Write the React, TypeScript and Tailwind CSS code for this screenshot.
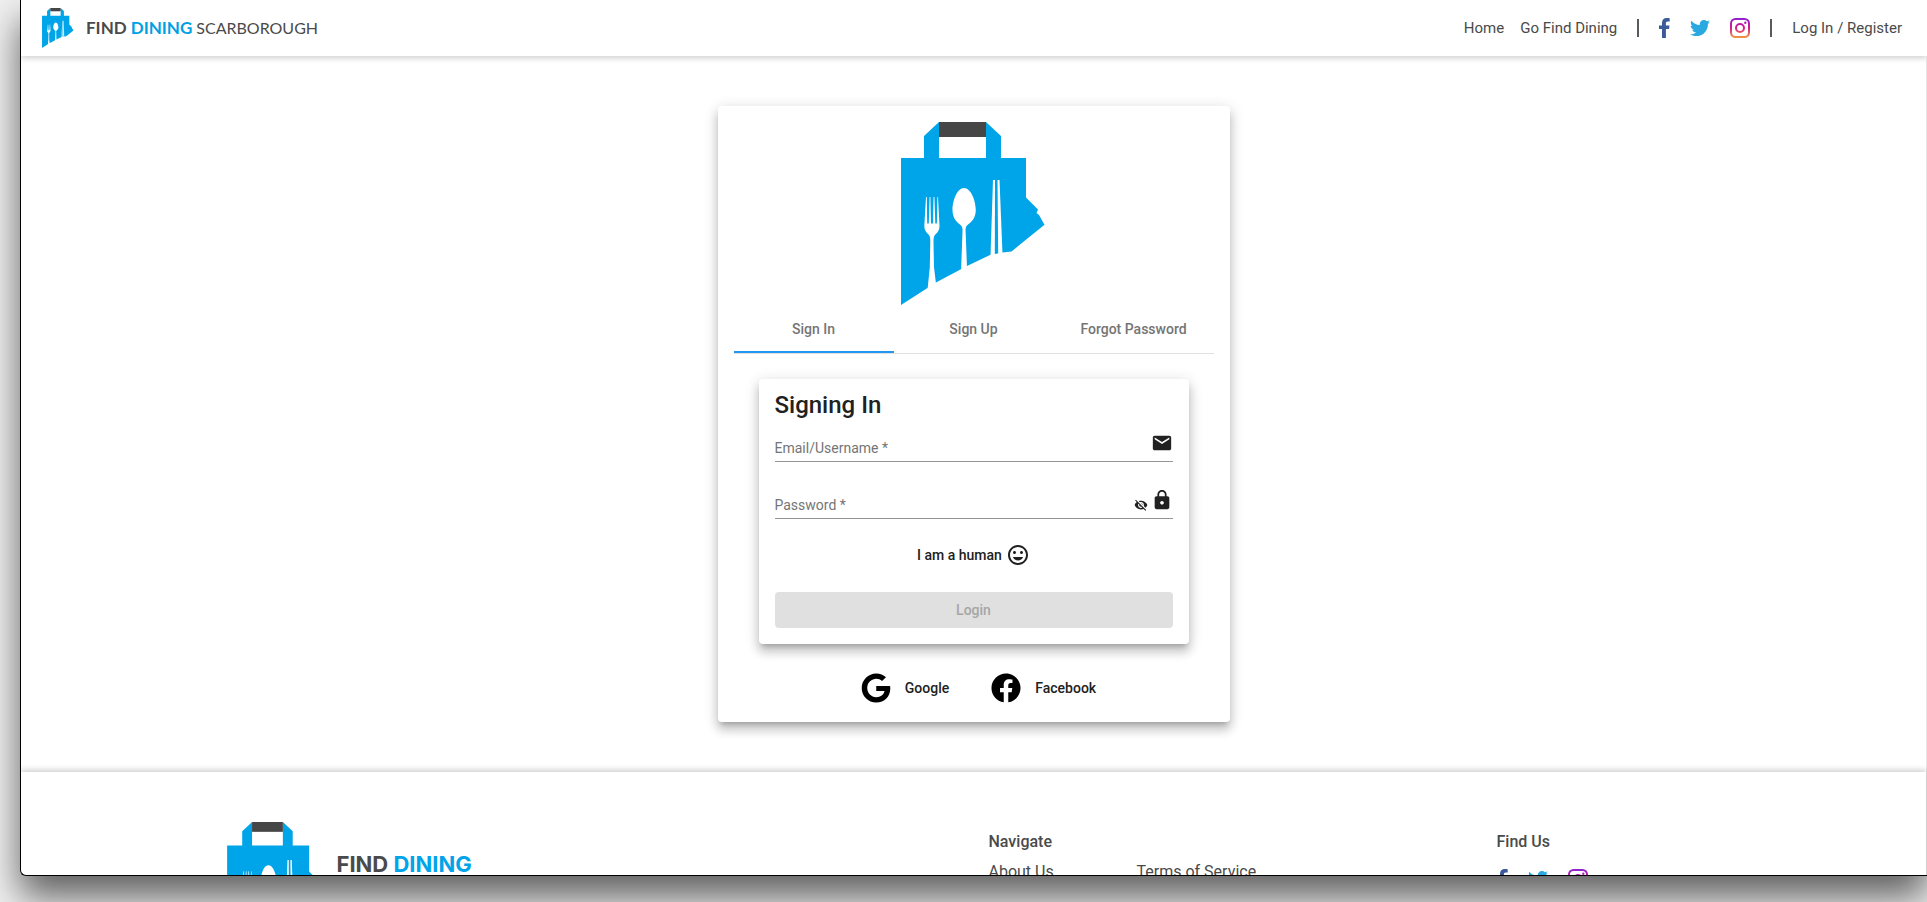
import React from "react";
import { FaTwitter, FaGoogle, FaFacebook } from "react-icons/fa";
import { MdEmail, MdLock, MdVisibilityOff, MdMood } from "react-icons/md";

function BagLogo({ className }: { className: string }) {
  return (
    <svg viewBox="0 0 146 183" className={className} aria-hidden="true">
      <g fill="#00a4e8">
        <path d="M0 36H125V75.500L137 87.500L135.500 91L138 93L143.500 102.700L110.500 129.500L101.500 130.500L89 133L66 144L34 161L26.500 166L0 183Z" />
        <path d="M23 37V14L38 0V37Z" />
        <path d="M85 0L100 14V37H85Z" />
      </g>
      <rect x="38" y="0" width="47" height="15" fill="#464646" />
      <g fill="#fff">
        <path d="M25 75L23.300 104C23.300 108 25 110 27.500 112.500C29 114 29.300 116 29.300 120L28.800 145L26.500 168L35 162L33 145L32.500 120C32.500 116 33 114 34.300 112.500C37 110 38.500 108 38.500 104L37 75H36.400L35.900 101.500H34.300L33.400 75H32.500L32 101.500H30L29.400 75H28.600L27.800 101.500H26.200L25.800 75Z" />
        <path d="M63 66C56 66 51.500 79 51.500 88C51.500 96 55.500 100 59.500 103C61.300 104.500 61.600 106 61.500 109L60 150L66 146L64.600 109C64.500 106 64.800 104.500 66.500 103C70.500 100 74.800 96 74.800 88C74.800 79 70 66 63 66Z" />
        <path d="M92 58H94L93.800 134H89.500Z" />
        <path d="M96.500 58H98.500L101.500 132H97.200Z" />
      </g>
    </svg>
  );
}

function InstagramIcon({ id }: { id: string }) {
  return (
    <svg viewBox="0 0 20 20" className="size-5" aria-hidden="true">
      <defs>
        <linearGradient id={id} x1="0" y1="0" x2="0" y2="1">
          <stop offset="0" stopColor="#8a22d6" />
          <stop offset="0.5" stopColor="#d81b8c" />
          <stop offset="1" stopColor="#f09a3e" />
        </linearGradient>
      </defs>
      <path
        fill={`url(#${id})`}
        fillRule="evenodd"
        d="M5.500 0H14.500A5.500 5.500 0 0 1 20 5.500V14.500A5.500 5.500 0 0 1 14.500 20H5.500A5.500 5.500 0 0 1 0 14.500V5.500A5.500 5.500 0 0 1 5.500 0ZM5.500 2A3.500 3.500 0 0 0 2 5.500V14.500A3.500 3.500 0 0 0 5.500 18H14.500A3.500 3.500 0 0 0 18 14.500V5.500A3.500 3.500 0 0 0 14.500 2ZM10 5A5 5 0 1 1 10 15A5 5 0 0 1 10 5ZM10 7A3 3 0 1 0 10 13A3 3 0 0 0 10 7ZM15.300 3.500A1.200 1.200 0 1 1 15.300 5.900A1.200 1.200 0 0 1 15.300 3.500Z"
      />
    </svg>
  );
}

/* Solid "f" mark with square stems */
function FacebookMark() {
  return (
    <svg viewBox="0 0 11 20" className="h-5 w-[11px]" fill="#3b5a9a" aria-hidden="true">
      <path d="M3 20V11H0V7.500H3V5C3 1.800 4.900 0 7.700 0C9.100 0 10.300 0.100 10.700 0.200V3.400H8.800C7.200 3.400 6.900 4.200 6.900 5.300V7.500H10.500L10 11H6.900V20Z" />
    </svg>
  );
}

function SocialLinks({ id }: { id: string }) {
  return (
    <div className="flex items-center gap-5">
      <a href="#facebook" aria-label="Facebook">
        <FacebookMark />
      </a>
      <a href="#twitter" aria-label="Twitter">
        <FaTwitter className="size-5 text-[#2aa9e0]" />
      </a>
      <a href="#instagram" aria-label="Instagram">
        <InstagramIcon id={id} />
      </a>
    </div>
  );
}

function Header() {
  return (
    <header className="flex h-14 shrink-0 items-center justify-between pr-[25px] pl-[21px] shadow-[0_2px_6px_rgba(0,0,0,0.2)]">
      <a href="#home" className="flex items-center gap-3">
        <BagLogo className="h-10 w-8" />
        <span className="flex items-baseline gap-1 font-[Lato,sans-serif] text-[17px] text-[#4a4a4a]">
          <b>FIND</b>
          <b className="text-[#00a0e4]">DINING</b>
          <span className="text-base">SCARBOROUGH</span>
        </span>
      </a>
      <nav className="flex items-center gap-5 text-[15px] text-[#4a4a4a]">
        <div className="flex gap-4">
          <a href="#home">Home</a>
          <a href="#find">Go Find Dining</a>
        </div>
        <span className="h-[18px] w-0.5 bg-[#5a5a5a]" />
        <SocialLinks id="instagram-header" />
        <span className="h-[18px] w-0.5 bg-[#5a5a5a]" />
        <a href="#login">Log In / Register</a>
      </nav>
    </header>
  );
}

const cardShadow =
  "rounded bg-white shadow-[0_5px_5px_-3px_rgba(0,0,0,0.2),0_8px_10px_1px_rgba(0,0,0,0.14),0_3px_14px_2px_rgba(0,0,0,0.12)]";

function Field({
  id,
  label,
  type,
  children,
}: {
  id: string;
  label: string;
  type: string;
  children: React.ReactNode;
}) {
  return (
    <div className="flex h-[41px] border-b border-[#949494]">
      <div className="relative flex flex-1 items-end pb-[3px]">
        <input
          id={id}
          type={type}
          placeholder=" "
          className="peer absolute inset-0 w-full bg-transparent pt-4 text-sm outline-none"
        />
        <label
          htmlFor={id}
          className="pointer-events-none text-sm text-[#757575] peer-focus:-translate-y-5 peer-[:not(:placeholder-shown)]:-translate-y-5"
        >
          {label}
        </label>
      </div>
      <div className="flex items-center pt-[3px]">{children}</div>
    </div>
  );
}

function SignInForm() {
  return (
    <form className={`${cardShadow} mx-[25px] mt-[25px] px-4 pb-4`}>
      <h1 className="pt-2.5 text-2xl font-medium">Signing In</h1>
      <Field id="email" label="Email/Username *" type="text">
        <MdEmail className="size-[22px]" />
      </Field>
      <div className="mt-4">
        <Field id="password" label="Password *" type="password">
          <button type="button" aria-label="Show password" className="mr-[3px] pt-2.5">
            <MdVisibilityOff className="size-3.5" />
          </button>
          <MdLock className="size-[22px]" />
        </Field>
      </div>
      <button type="button" className="mx-auto mt-[18px] flex h-9 items-center gap-1 text-sm font-medium">
        I am a human
        <MdMood className="size-6" />
      </button>
      <button disabled className="mt-[19px] h-9 w-full rounded bg-[#e0e0e0] text-sm font-medium text-[#a6a6a6]">
        Login
      </button>
    </form>
  );
}

function Footer() {
  return (
    <footer className="shrink-0 shadow-[0_-2px_6px_rgba(0,0,0,0.2)]">
      <div className="mx-auto grid w-4/5 grid-cols-12 pt-[50px] text-[#4a4a4a]">
        <div className="col-span-6 flex items-start gap-3.5 px-[15px]">
          <BagLogo className="h-[120px] w-24" />
          <span className="pt-7 font-[Inter,sans-serif] text-[22px] leading-7 font-bold">
            FIND <span className="text-[#00a4e8]">DINING</span>
          </span>
        </div>
        <div className="col-span-4 px-[15px] pt-2">
          <h2 className="font-medium">Navigate</h2>
          <div className="mt-1.5 flex">
            <a href="#about" className="w-[148px]">About Us</a>
            <a href="#terms">Terms of Service</a>
          </div>
        </div>
        <div className="col-span-2 px-[15px] pt-2">
          <h2 className="mb-[15px] font-medium">Find Us</h2>
          <SocialLinks id="instagram-footer" />
        </div>
      </div>
    </footer>
  );
}

export default function App() {
  return (
    <div className="h-screen overflow-hidden bg-[#f0f0f0] pb-[26px] pl-5 font-[Roboto,sans-serif] text-[#212121]">
      <div className="flex h-full flex-col overflow-hidden rounded-bl-md border-b border-l border-black bg-white shadow-[0_21px_36px_rgba(0,0,0,0.6)]">
        <Header />
        <div className="flex min-h-0 flex-1 flex-col border-r border-[#e4e4e4]">
          <main className="mx-auto my-[50px] w-[512px] shrink-0">
            <section className={`${cardShadow} p-4`}>
              <BagLogo className="mx-auto h-[183px] w-[146px]" />
              <div role="tablist" className="grid grid-cols-3 border-b border-[#e0e0e0] text-sm font-medium text-[#757575]">
                <button role="tab" aria-selected="true" className="h-12 border-b-2 border-[#2196f3] pt-0.5">Sign In</button>
                <button role="tab" aria-selected="false" className="h-12 border-b-2 border-transparent pt-0.5">Sign Up</button>
                <button role="tab" aria-selected="false" className="h-12 border-b-2 border-transparent pt-0.5">Forgot Password</button>
              </div>
              <SignInForm />
              <div className="mt-[26px] flex h-9 items-center justify-center gap-[42px] pl-2.5 text-sm font-medium">
                <button className="flex items-center gap-3.5">
                  <FaGoogle className="size-[30px] text-black" />
                  Google
                </button>
                <button className="flex items-center gap-3.5">
                  <FaFacebook className="size-[30px] text-black" />
                  Facebook
                </button>
              </div>
            </section>
          </main>
          <Footer />
        </div>
      </div>
    </div>
  );
}
